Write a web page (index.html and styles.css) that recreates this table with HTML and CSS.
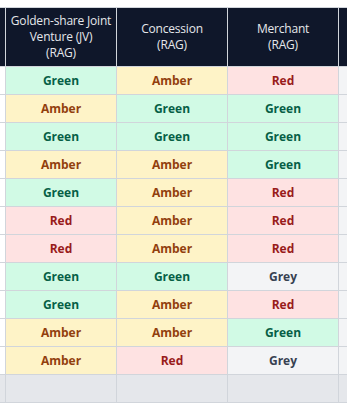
FILE: index.html
```html
<!DOCTYPE html>
<html>
<head>
<meta charset="utf-8">
<link rel="stylesheet" href="styles.css">
</head>
<body>
<div class="viewport">
<table class="rag">
  <colgroup>
    <col class="c"><col class="c"><col class="c"><col class="c"><col class="c">
  </colgroup>
  <thead>
    <tr>
      <th></th>
      <th>Golden-share Joint<br>Venture (JV)<br>(RAG)</th>
      <th>Concession<br>(RAG)</th>
      <th>Merchant<br>(RAG)</th>
      <th></th>
    </tr>
  </thead>
  <tbody>
    <tr><td class="lead"></td><td class="g">Green</td><td class="a">Amber</td><td class="r">Red</td><td class="tail"></td></tr>
    <tr><td class="lead"></td><td class="a">Amber</td><td class="g">Green</td><td class="g">Green</td><td class="tail"></td></tr>
    <tr><td class="lead"></td><td class="g">Green</td><td class="g">Green</td><td class="g">Green</td><td class="tail"></td></tr>
    <tr><td class="lead"></td><td class="a">Amber</td><td class="a">Amber</td><td class="g">Green</td><td class="tail"></td></tr>
    <tr><td class="lead"></td><td class="g">Green</td><td class="a">Amber</td><td class="r">Red</td><td class="tail"></td></tr>
    <tr><td class="lead"></td><td class="r">Red</td><td class="a">Amber</td><td class="r">Red</td><td class="tail"></td></tr>
    <tr><td class="lead"></td><td class="r">Red</td><td class="a">Amber</td><td class="r">Red</td><td class="tail"></td></tr>
    <tr><td class="lead"></td><td class="g">Green</td><td class="g">Green</td><td class="x">Grey</td><td class="tail"></td></tr>
    <tr><td class="lead"></td><td class="g">Green</td><td class="a">Amber</td><td class="r">Red</td><td class="tail"></td></tr>
    <tr><td class="lead"></td><td class="a">Amber</td><td class="a">Amber</td><td class="g">Green</td><td class="tail"></td></tr>
    <tr><td class="lead"></td><td class="a">Amber</td><td class="r">Red</td><td class="x">Grey</td><td class="tail"></td></tr>
    <tr class="foot"><td></td><td></td><td></td><td></td><td></td></tr>
  </tbody>
</table>
</div>
</body>
</html>
```
FILE: styles.css
```css
html, body {
  margin: 0;
  padding: 0;
  background: #ffffff;
}
.viewport {
  width: 347px;
  height: 407px;
  overflow: hidden;
  padding-top: 7px;
  box-sizing: border-box;
}
.rag {
  border-collapse: collapse;
  table-layout: fixed;
  width: 555px;
  margin-left: -106px;
  font-family: "Open Sans", "Noto Sans", sans-serif;
  font-size: 12px;
}
.rag .c { width: 111px; }
.rag th, .rag td {
  border: 1px solid #d1d5db;
  text-align: center;
  padding: 0;
}
.rag th {
  background: #0f172a;
  color: #e5e7eb;
  font-weight: 400;
  line-height: 16px;
  height: 58px;
  white-space: nowrap;
  letter-spacing: -0.2px;
}
.rag td {
  height: 27px;
  font-weight: 700;
  line-height: 16px;
}
.rag td.lead { background: #ffffff; }
.rag td.tail { background: #f3f4f6; }
.rag td.g { background: #d1fae5; color: #065f46; }
.rag td.a { background: #fef3c7; color: #92400e; }
.rag td.r { background: #fee2e2; color: #991b1b; }
.rag td.x { background: #f3f4f6; color: #374151; }
.rag tr.foot td { background: #e5e7eb; }
```
